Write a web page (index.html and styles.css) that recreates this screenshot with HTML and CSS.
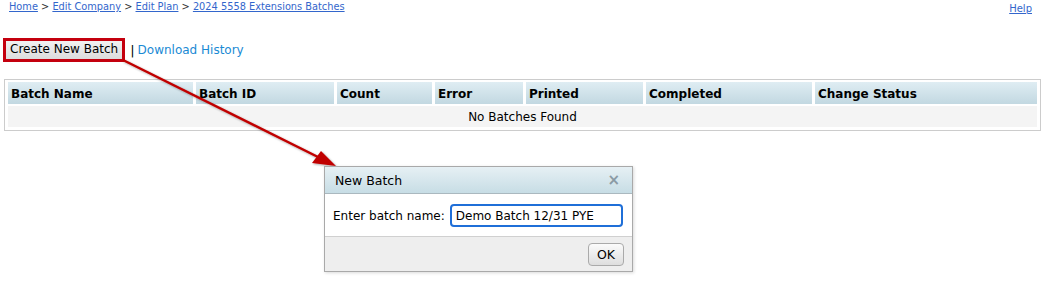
FILE: index.html
```html
<!doctype html>
<html lang="en">
  <head>
    <meta charset="UTF-8" />
    <title>Batches</title>
    <link rel="stylesheet" href="styles.css">
  </head>
  <body>
    <div class="page">
      <!-- Breadcrumb -->
      <div class="topbar">
        <div class="crumbs">
          <a href="#">Home</a> &gt; <a href="#">Edit Company</a> &gt;
          <a href="#">Edit Plan</a> &gt;
          <a href="#">2024 5558 Extensions Batches</a>
        </div>
        <a href="#" class="help">Help</a>
      </div>

      <!-- Actions -->
      <div class="actions">
        <span class="highlight"><button class="create-btn">Create New Batch</button></span>
        <span class="sep">|</span>
        <a href="#" class="history">Download History</a>
      </div>

      <!-- Batches table -->
      <div class="grid-wrap">
        <table class="grid">
          <colgroup>
            <col style="width:185px" />
            <col style="width:138px" />
            <col style="width:95px" />
            <col style="width:88px" />
            <col style="width:117px" />
            <col style="width:166px" />
            <col />
          </colgroup>
          <thead>
            <tr>
              <th>Batch Name</th>
              <th>Batch ID</th>
              <th>Count</th>
              <th>Error</th>
              <th>Printed</th>
              <th>Completed</th>
              <th>Change Status</th>
            </tr>
          </thead>
          <tbody>
            <tr>
              <td colspan="7" class="empty">No Batches Found</td>
            </tr>
          </tbody>
        </table>
      </div>

      <!-- Callout arrow -->
      <svg class="callout" width="1050" height="281" viewBox="0 0 1050 281">
        <defs>
          <filter id="shadow" x="-10%" y="-10%" width="120%" height="120%">
            <feDropShadow dx="1" dy="1" stdDeviation="1" flood-color="#000" flood-opacity="0.35" />
          </filter>
        </defs>
        <g filter="url(#shadow)">
          <line x1="123" y1="60" x2="320" y2="158" stroke="#c00000" stroke-width="2.5" />
          <polygon points="336,166 312,163 321,151" fill="#c00000" />
        </g>
      </svg>

      <!-- Dialog -->
      <div class="dialog">
        <div class="dialog-title">
          <span>New Batch</span>
          <span class="close">&#215;</span>
        </div>
        <div class="dialog-body">
          <label>Enter batch name:</label>
          <input type="text" value="Demo Batch 12/31 PYE" />
        </div>
        <div class="dialog-footer">
          <button class="ok-btn">OK</button>
        </div>
      </div>
    </div>
  </body>
</html>
```

FILE: styles.css
```css
* {
  box-sizing: border-box;
}

html,
body {
  margin: 0;
  padding: 0;
  background: #fff;
}

.page {
  position: relative;
  width: 1050px;
  height: 281px;
  padding: 0 4px;
  font-family: "DejaVu Sans", Verdana, sans-serif;
  font-size: 12px;
  color: #000;
}

a {
  color: #1a8ad4;
  text-decoration: none;
}

.topbar {
  display: flex;
  justify-content: space-between;
  padding: 1px 14px 0 5px;
  font-size: 9.8px;
  color: #333;
  height: 20px;
}

.topbar a {
  color: #3366cc;
  text-decoration: underline;
}

.help {
  margin-top: 2px;
  font-size: 10px;
}

.actions {
  display: flex;
  align-items: center;
  gap: 5px;
  margin-top: 18px;
  height: 24px;
}

.highlight {
  display: inline-block;
  border: 3px solid #c4000e;
  margin-left: -1px;
}

.create-btn {
  display: block;
  font-family: inherit;
  font-size: 12px;
  padding: 1px 4px 2px;
  height: 18px;
  line-height: 15px;
  border: none;
  background: linear-gradient(#f2f2f2, #dcdcdc);
  color: #000;
}

.sep {
  color: #000;
  font-size: 13px;
}

.history {
  font-size: 12px;
  color: #1a8ad4;
  margin-left: -2px;
}

.grid-wrap {
  margin-top: 17px;
  border: 1px solid #cccccc;
  padding: 2px 3px 3px;
  width: 1037px;
}

.grid {
  border-collapse: separate;
  border-spacing: 3px 2px;
  margin: -2px -3px;
  width: calc(100% + 6px);
  table-layout: fixed;
}

.grid th {
  text-align: left;
  font-weight: bold;
  font-size: 12px;
  height: 22px;
  padding: 1px 3px 0;
  background: linear-gradient(#dfedf3, #c2d8e1);
  color: #000;
}

.grid td {
  background: #f4f4f4;
  height: 21px;
  font-size: 12px;
}

.grid td.empty {
  text-align: center;
}

.callout {
  position: absolute;
  left: 0;
  top: 0;
  pointer-events: none;
}

.dialog {
  position: absolute;
  left: 324px;
  top: 166px;
  width: 309px;
  border: 1px solid #a9a9a9;
  background: #fff;
  box-shadow: 1px 1px 3px rgba(0, 0, 0, 0.15);
}

.dialog-title {
  display: flex;
  justify-content: space-between;
  align-items: center;
  height: 27px;
  padding: 0 12px 0 10px;
  background: linear-gradient(#e6f0f4, #c7dde5);
  border-bottom: 1px solid #aab8bf;
  font-size: 12.5px;
}

.close {
  color: #8a9aa4;
  font-weight: bold;
  font-size: 15px;
}

.dialog-body {
  display: flex;
  align-items: center;
  gap: 5px;
  padding: 10px 8px 9px 8px;
  border-bottom: 1px solid #d0d0d0;
  font-size: 12px;
  white-space: nowrap;
}

.dialog-body input {
  flex: none;
  width: 173px;
  height: 23px;
  font-family: inherit;
  font-size: 12px;
  padding: 0 4px;
  border: 2px solid #1f6fd8;
  border-radius: 4px;
  outline: none;
}

.dialog-footer {
  display: flex;
  justify-content: flex-end;
  padding: 6px 8px 4px;
  background: #eeeeee;
  height: 34px;
}

.ok-btn {
  font-family: inherit;
  font-size: 12.5px;
  width: 36px;
  height: 23px;
  border: 1px solid #aaa;
  border-radius: 4px;
  background: linear-gradient(#fbfbfb, #dedede);
  padding: 0;
}
```
